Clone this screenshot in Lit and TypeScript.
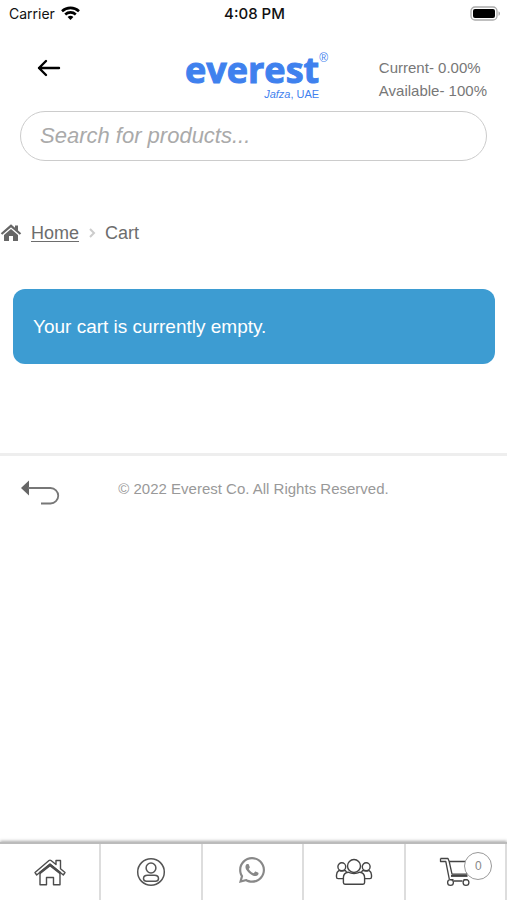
import { LitElement, html, css, svg } from "lit";
import { customElement, property } from "lit/decorators.js";

const icons = {
  home: svg`<svg width="34" height="30" viewBox="0 0 34 30" fill="none" stroke="#4c4c4c" stroke-width="1.4" stroke-linejoin="round">
    <path d="M2 15.500 16 3.500Q17 2.800 18 3.500L23 7.500V3.500h4.500v8.200L32 15.500 30.300 18 17 7 3.700 18Z"/>
    <path d="M7 16v11.700h6.500V20.500h7v7.200h6.500V16L17 8Z"/>
    <path d="M6.500 16.300 17 8 27.500 16.300" stroke-width="2.400"/></svg>`,
  account: svg`<svg width="30" height="30" viewBox="0 0 30 30" fill="none" stroke="#555" stroke-width="1.5">
    <circle cx="15" cy="15" r="13.300"/><circle cx="15" cy="11" r="4.900"/>
    <path d="M11.500 18.300h7c2.600 0 4 1.700 4 3.300 0 1.700-1 2.700-3 2.700h-9c-2 0-3-1-3-2.700 0-1.600 1.400-3.300 4-3.300Z"/></svg>`,
  whatsapp: svg`<svg width="26" height="30" viewBox="0 0 448 517" fill="#888">
    <path d="M380.900 65.100C339 23.100 283.200 0 223.900 0 101.500 0 1.900 99.600 1.900 222c0 39.100 10.200 77.300 29.600 111L0 448l117.700-30.900c32.400 17.700 68.900 27 106.100 27h.1c122.300 0 224.100-99.600 224.100-222 0-59.300-25.200-115-67.100-157zm-157 341.600c-33.200 0-65.700-8.900-94-25.700l-6.700-4-69.800 18.300L72 327.200l-4.400-7c-18.500-29.400-28.200-63.300-28.200-98.200 0-101.700 82.800-184.500 184.600-184.500 49.300 0 95.600 19.200 130.400 54.100 34.800 34.900 56.200 81.200 56.100 130.500 0 101.800-84.900 184.600-186.600 184.600zm101.200-138.200c-5.500-2.800-32.800-16.200-37.900-18-5.100-1.900-8.800-2.800-12.500 2.800-3.700 5.600-14.300 18-17.600 21.800-3.200 3.700-6.500 4.200-12 1.400-32.600-16.300-54-29.100-75.500-66-5.700-9.800 5.700-9.100 16.300-30.300 1.800-3.700.9-6.900-.5-9.700-1.400-2.800-12.500-30.100-17.100-41.200-4.500-10.800-9.100-9.300-12.500-9.500-3.200-.2-6.900-.2-10.600-.2-3.700 0-9.700 1.400-14.800 6.900-5.100 5.600-19.400 19-19.400 46.300 0 27.300 19.900 53.700 22.600 57.400 2.800 3.700 39.100 59.700 94.800 83.800 35.200 15.200 49 16.500 66.600 13.900 10.700-1.600 32.800-13.400 37.400-26.400 4.600-13 4.600-24.100 3.200-26.400-1.300-2.500-5-3.900-10.500-6.600z"/></svg>`,
  people: svg`<svg width="38" height="30" viewBox="0 0 38 30" fill="none" stroke="#444" stroke-width="1.400" stroke-linejoin="round">
    <circle cx="19" cy="9" r="6.500"/>
    <path d="M13 15.200c4 1.800 8 1.800 12 0 2.800.6 4.600 2.600 4.600 5.300v5c0 1-.6 1.700-1.600 1.700H10c-1 0-1.600-.7-1.600-1.700v-5c0-2.700 1.800-4.700 4.600-5.300Z"/>
    <circle cx="6.800" cy="9.700" r="3.900"/><circle cx="31.200" cy="9.700" r="3.900"/>
    <path d="M4 13.300c-1.500 1-2.500 2.700-2.500 4.700v2c0 1 .6 1.600 1.600 1.600h5.200M4 13.300c2 1 4.300 1 6.300.1l1.400 2"/>
    <path d="M34 13.300c1.500 1 2.500 2.700 2.500 4.700v2c0 1-.6 1.600-1.600 1.600h-5.200M34 13.300c-2 1-4.300 1-6.300.1l-1.400 2"/></svg>`,
  cart: svg`<svg width="32" height="30" viewBox="0 0 32 30" fill="none" stroke="#444" stroke-width="1.3" stroke-linejoin="round">
    <path d="M1.500 1.500h7.500l1.200 3H31l-3.500 12.700H13M1.500 1.500v3h5.300l3.500 17.700M10.200 4.500 13 17.200"/>
    <path d="M12 18.800h16.500" stroke-width="2.200"/>
    <path d="M11 22.700h3.500M14.500 24h9M24.500 22.700h4"/>
    <circle cx="11.500" cy="25.500" r="2.900"/><circle cx="27" cy="25.500" r="2.900"/></svg>`,
};

@customElement("status-bar")
export class StatusBar extends LitElement {
  static styles = css`
    :host { display: grid; grid-template-columns: 1fr auto 1fr; align-items: center; height: 28px; padding: 0 7px 0 9px;
      font: 14px/28px Inter, sans-serif; color: #111; }
    .carrier { display: flex; align-items: center; gap: 6px; }
    .time { font-size: 15px; font-weight: 500; }
    .battery { justify-self: end; display: block; }
  `;
  render() {
    return html`
      <span class="carrier">Carrier
        <svg width="19" height="16" viewBox="0 0 19 16" fill="none" stroke="#000" stroke-width="2.600">
          <path d="M1 5.200C5.800.7 13.200.7 18 5.200"/><path d="M4.200 8.500c3-2.800 7.600-2.800 10.600 0"/>
          <path d="M9.500 14 6.600 10.900c1.700-1.500 4.100-1.500 5.800 0Z" fill="#000" stroke="none"/></svg>
      </span>
      <time class="time">4:08 PM</time>
      <svg class="battery" width="31" height="17" viewBox="0 0 31 17">
        <rect x="2" y="1" width="26" height="13" rx="4" fill="#fff" stroke="#aaa" stroke-width="1.300"/>
        <rect x="4" y="3" width="22" height="9" rx="2" fill="#000"/>
        <path d="M29.500 5.200c2 .8 2 3.800 0 4.600Z" fill="#aaa"/></svg>`;
  }
}

@customElement("shop-header")
export class ShopHeader extends LitElement {
  static styles = css`
    :host { display: block; padding: 20px 20px 0; }
    .top { display: grid; grid-template-columns: 1fr auto 1fr; align-items: start; height: 63px; }
    .back { justify-self: start; margin: 8px 0 0 16px; padding: 0; border: 0; background: none; display: flex; }
    .logo { display: grid; grid-template-columns: auto auto; color: #3f81ee; text-decoration: none; margin: 4px 0 0 6px; }
    .name { font: 700 36px/36px "Open Sans", sans-serif; -webkit-text-stroke: 1px #3f81ee; }
    .mark { font: 12px/12px "Liberation Sans", sans-serif; }
    .place { grid-column: 1; justify-self: end; font: 11px/12px "Liberation Sans", sans-serif; }
    .usage { justify-self: end; font-size: 15px; line-height: 23px; color: #777; margin-top: 8px; }
    .search { display: block; box-sizing: border-box; width: 100%; height: 50px; padding: 0 19px; border: 1px solid #ccc;
      border-radius: 25px; background: #fff; font: 22px "Liberation Sans", sans-serif; color: #555; }
    .search::placeholder { color: #aaa; font-style: italic; opacity: 1; }
  `;
  render() {
    return html`
      <div class="top">
        <button class="back" aria-label="Back">
          <svg width="26" height="24" viewBox="0 0 26 24" fill="none" stroke="#000" stroke-width="2.400" stroke-linecap="round" stroke-linejoin="round">
            <path d="M23 12H3M10 5 3 12l7 7"/></svg>
        </button>
        <a class="logo" href="#"><span class="name">everest</span><span class="mark">®</span><span class="place"><i>Jafza</i>, UAE</span></a>
        <div class="usage"><div>Current- 0.00%</div><div>Available- 100%</div></div>
      </div>
      <input class="search" type="search" aria-label="Search for products" placeholder="Search for products...">`;
  }
}

@customElement("tab-bar")
export class TabBar extends LitElement {
  @property({ type: Number }) count = 0;
  static styles = css`
    :host { display: block; }
    .bar { display: grid; grid-template-columns: repeat(5, 1fr); height: 56px; border-top: 2px solid #bbb; box-shadow: 0 -1px 3px #aaa; background: #fff; }
    .tab { display: flex; align-items: center; justify-content: center; border-right: 2px solid #ddd; text-decoration: none; }
    .cart { position: relative; display: flex; }
    .badge { position: absolute; left: 25px; top: -5px; box-sizing: border-box; width: 28px; height: 28px; border: 1px solid #999;
      border-radius: 50%; background: #fff; font: 12px/26px "Liberation Sans", sans-serif; text-align: center; color: #888; }
  `;
  render() {
    return html`<nav class="bar">
      <a class="tab" href="#" aria-label="Home">${icons.home}</a>
      <a class="tab" href="#" aria-label="Account">${icons.account}</a>
      <a class="tab" href="#" aria-label="WhatsApp">${icons.whatsapp}</a>
      <a class="tab" href="#" aria-label="Community">${icons.people}</a>
      <a class="tab" href="#" aria-label="Cart"><span class="cart">${icons.cart}<span class="badge">${this.count}</span></span></a>
    </nav>`;
  }
}

@customElement("app-root")
export class AppRoot extends LitElement {
  static styles = css`
    :host { display: flex; flex-direction: column; min-height: 100vh; background: #fff; font-family: "Liberation Sans", Arial, sans-serif; }
    .crumbs { display: flex; align-items: center; height: 24px; margin-top: 60px; font-size: 18px; color: #6d6d6d; }
    .home { display: flex; align-items: center; gap: 9px; color: inherit; text-decoration: none; }
    .label { text-decoration: underline; text-underline-offset: 2px; }
    .sep { margin: 0 9px 0 10px; }
    .notice { margin: 44px 12px 0 13px; padding: 26px 20px; border-radius: 12px; background: #3d9cd2; color: #fff; font-size: 19px; line-height: 23px; }
    .footer { display: grid; grid-template-columns: 1fr auto 1fr; align-items: start; margin-top: 89px; padding: 22px 20px; border-top: 3px solid #eee; }
    .return { justify-self: start; padding: 0; border: 0; background: none; display: flex; }
    .copy { margin: 0; font-size: 15px; line-height: 22px; color: #999; }
    .tabs { margin-top: auto; }
  `;
  render() {
    return html`
      <status-bar></status-bar>
      <shop-header></shop-header>
      <main>
        <nav class="crumbs" aria-label="Breadcrumb">
          <a class="home" href="#">
            <svg width="22" height="20" viewBox="0 0 22 20" fill="#666">
              <path d="M11 6 18 12v5.500q0 .5-.5.500H13v-5H9v5H4.500Q4 18 4 17.500V12Z"/>
              <path d="M1.500 11 11 2.800 20.500 11" fill="none" stroke="#666" stroke-width="2.200"/>
              <path d="M15 2.500h3V8l-3-2.500Z"/></svg>
            <span class="label">Home</span>
          </a>
          <svg class="sep" width="7" height="12" viewBox="0 0 7 12" fill="none" stroke="#ccc" stroke-width="2"><path d="m1 2 4 4-4 4"/></svg>
          <span>Cart</span>
        </nav>
        <div class="notice" role="status">Your cart is currently empty.</div>
      </main>
      <footer class="footer">
        <button class="return" aria-label="Return">
          <svg width="40" height="28" viewBox="0 0 40 28">
            <path d="M1 10 9 2.500v15Z" fill="#666"/>
            <path d="M8 10h22.500a7.500 7.500 0 0 1 0 15.500H21" fill="none" stroke="#777" stroke-width="1.800"/></svg>
        </button>
        <p class="copy">© 2022 Everest Co. All Rights Reserved.</p>
      </footer>
      <tab-bar class="tabs" .count=${0}></tab-bar>`;
  }
}
